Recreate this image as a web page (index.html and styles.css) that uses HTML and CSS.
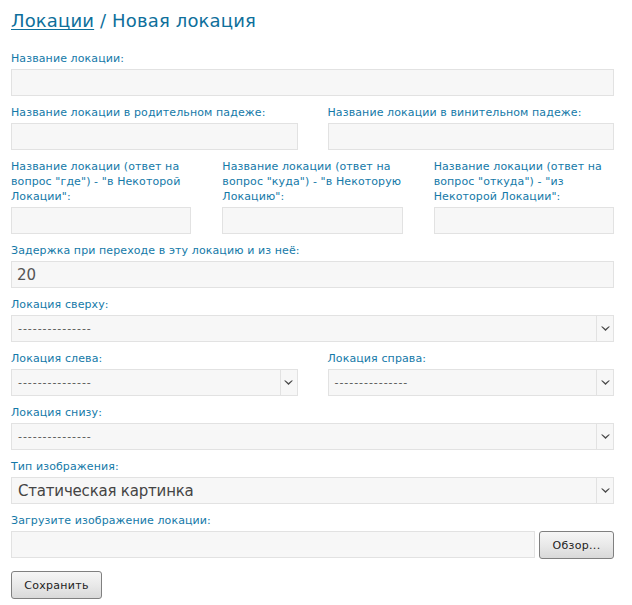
FILE: index.html
```html
<!DOCTYPE html>
<html lang="ru">
<head>
<meta charset="utf-8">
<title>Новая локация</title>
<link rel="stylesheet" href="styles.css">
</head>
<body>
<h1 class="title"><a href="#" class="crumb">Локации</a> / Новая локация</h1>
<form class="form">
  <div class="field">
    <label class="label">Название локации:</label>
    <input class="input" type="text">
  </div>
  <div class="row two">
    <div class="field">
      <label class="label">Название локации в родительном падеже:</label>
      <input class="input" type="text">
    </div>
    <div class="field">
      <label class="label">Название локации в винительном падеже:</label>
      <input class="input" type="text">
    </div>
  </div>
  <div class="row three">
    <div class="field">
      <label class="label">Название локации (ответ на вопрос "где") - "в Некоторой Локации":</label>
      <input class="input" type="text">
    </div>
    <div class="field">
      <label class="label">Название локации (ответ на вопрос "куда") - "в Некоторую Локацию":</label>
      <input class="input" type="text">
    </div>
    <div class="field">
      <label class="label">Название локации (ответ на вопрос "откуда") - "из Некоторой Локации":</label>
      <input class="input" type="text">
    </div>
  </div>
  <div class="field">
    <label class="label">Задержка при переходе в эту локацию и из неё:</label>
    <input class="input big" type="text" value="20">
  </div>
  <div class="field">
    <label class="label">Локация сверху:</label>
    <div class="select"><span class="select-value">---------------</span><span class="arrow"><svg width="9" height="6" viewBox="0 0 9 6"><path d="M0 0.5 L4.5 5 L9 0.5 L7.5 0.5 L4.5 3 L1.5 0.5 Z" fill="#4a4a4a"/></svg></span></div>
  </div>
  <div class="row two">
    <div class="field">
      <label class="label">Локация слева:</label>
      <div class="select"><span class="select-value">---------------</span><span class="arrow"><svg width="9" height="6" viewBox="0 0 9 6"><path d="M0 0.5 L4.5 5 L9 0.5 L7.5 0.5 L4.5 3 L1.5 0.5 Z" fill="#4a4a4a"/></svg></span></div>
    </div>
    <div class="field">
      <label class="label">Локация справа:</label>
      <div class="select"><span class="select-value">---------------</span><span class="arrow"><svg width="9" height="6" viewBox="0 0 9 6"><path d="M0 0.5 L4.5 5 L9 0.5 L7.5 0.5 L4.5 3 L1.5 0.5 Z" fill="#4a4a4a"/></svg></span></div>
    </div>
  </div>
  <div class="field">
    <label class="label">Локация снизу:</label>
    <div class="select"><span class="select-value">---------------</span><span class="arrow"><svg width="9" height="6" viewBox="0 0 9 6"><path d="M0 0.5 L4.5 5 L9 0.5 L7.5 0.5 L4.5 3 L1.5 0.5 Z" fill="#4a4a4a"/></svg></span></div>
  </div>
  <div class="field">
    <label class="label">Тип изображения:</label>
    <div class="select"><span class="select-value big">Статическая картинка</span><span class="arrow"><svg width="9" height="6" viewBox="0 0 9 6"><path d="M0 0.5 L4.5 5 L9 0.5 L7.5 0.5 L4.5 3 L1.5 0.5 Z" fill="#4a4a4a"/></svg></span></div>
  </div>
  <div class="field">
    <label class="label">Загрузите изображение локации:</label>
    <div class="file">
      <div class="file-name"></div>
      <button type="button" class="btn browse">Обзор...</button>
    </div>
  </div>
  <button type="button" class="btn save">Сохранить</button>
</form>
</body>
</html>
```
FILE: styles.css
```css
html, body {
  margin: 0;
  padding: 0;
  background: #ffffff;
}
body {
  padding: 0 18px 0 11px;
  font-family: "DejaVu Sans", Verdana, sans-serif;
}
.title {
  margin: 0;
  padding-top: 10px;
  height: 51px;
  box-sizing: border-box;
  font-size: 18px;
  font-weight: normal;
  line-height: 22px;
  color: #0e6f9b;
  letter-spacing: 0.15px;
}
.crumb {
  color: #0e6f9b;
  text-decoration: underline;
  text-underline-offset: 2px;
}
.form {
  display: flex;
  flex-direction: column;
}
.row {
  display: grid;
}
.row.two {
  grid-template-columns: 1fr 1fr;
  column-gap: 30px;
}
.row.three {
  grid-template-columns: 1fr 1fr 1fr;
  column-gap: 31px;
}
.field {
  display: flex;
  flex-direction: column;
  justify-content: flex-end;
  margin-bottom: 9px;
}
.label {
  display: block;
  font-size: 11px;
  line-height: 15px;
  color: #1479a8;
  letter-spacing: 0.1px;
  margin-bottom: 3px;
}
.input {
  display: block;
  box-sizing: border-box;
  width: 100%;
  height: 27px;
  margin: 0;
  padding: 0 5px;
  background: #f7f7f7;
  border: 1px solid #e2e2e2;
  font-family: "DejaVu Sans", sans-serif;
  font-size: 11px;
  color: #555;
  outline: none;
}
.input.big {
  font-size: 15px;
  color: #555;
  letter-spacing: 0;
}
.select {
  display: flex;
  box-sizing: border-box;
  height: 27px;
  background: #f7f7f7;
  border: 1px solid #e2e2e2;
}
.select-value {
  flex: 1;
  display: flex;
  align-items: center;
  padding-left: 6px;
  font-size: 11px;
  color: #555;
  letter-spacing: 0.95px;
}
.select-value.big {
  font-size: 15px;
  color: #444;
  letter-spacing: -0.2px;
}
.arrow {
  width: 16px;
  border-left: 1px solid #e2e2e2;
  display: flex;
  align-items: center;
  justify-content: center;
}
.file {
  display: flex;
  gap: 4px;
}
.file-name {
  flex: 1;
  height: 27px;
  box-sizing: border-box;
  background: #f7f7f7;
  border: 1px solid #e2e2e2;
}
.btn {
  box-sizing: border-box;
  height: 28px;
  border: 1px solid #808080;
  border-radius: 3px;
  background: linear-gradient(#f6f6f6, #e9e9e9 50%, #d9d9d9);
  font-family: "DejaVu Sans", sans-serif;
  font-size: 11px;
  color: #222;
  letter-spacing: 0.3px;
  padding: 0;
}
.browse {
  width: 75px;
}
.save {
  width: 91px;
  margin-top: 3px;
}
```
